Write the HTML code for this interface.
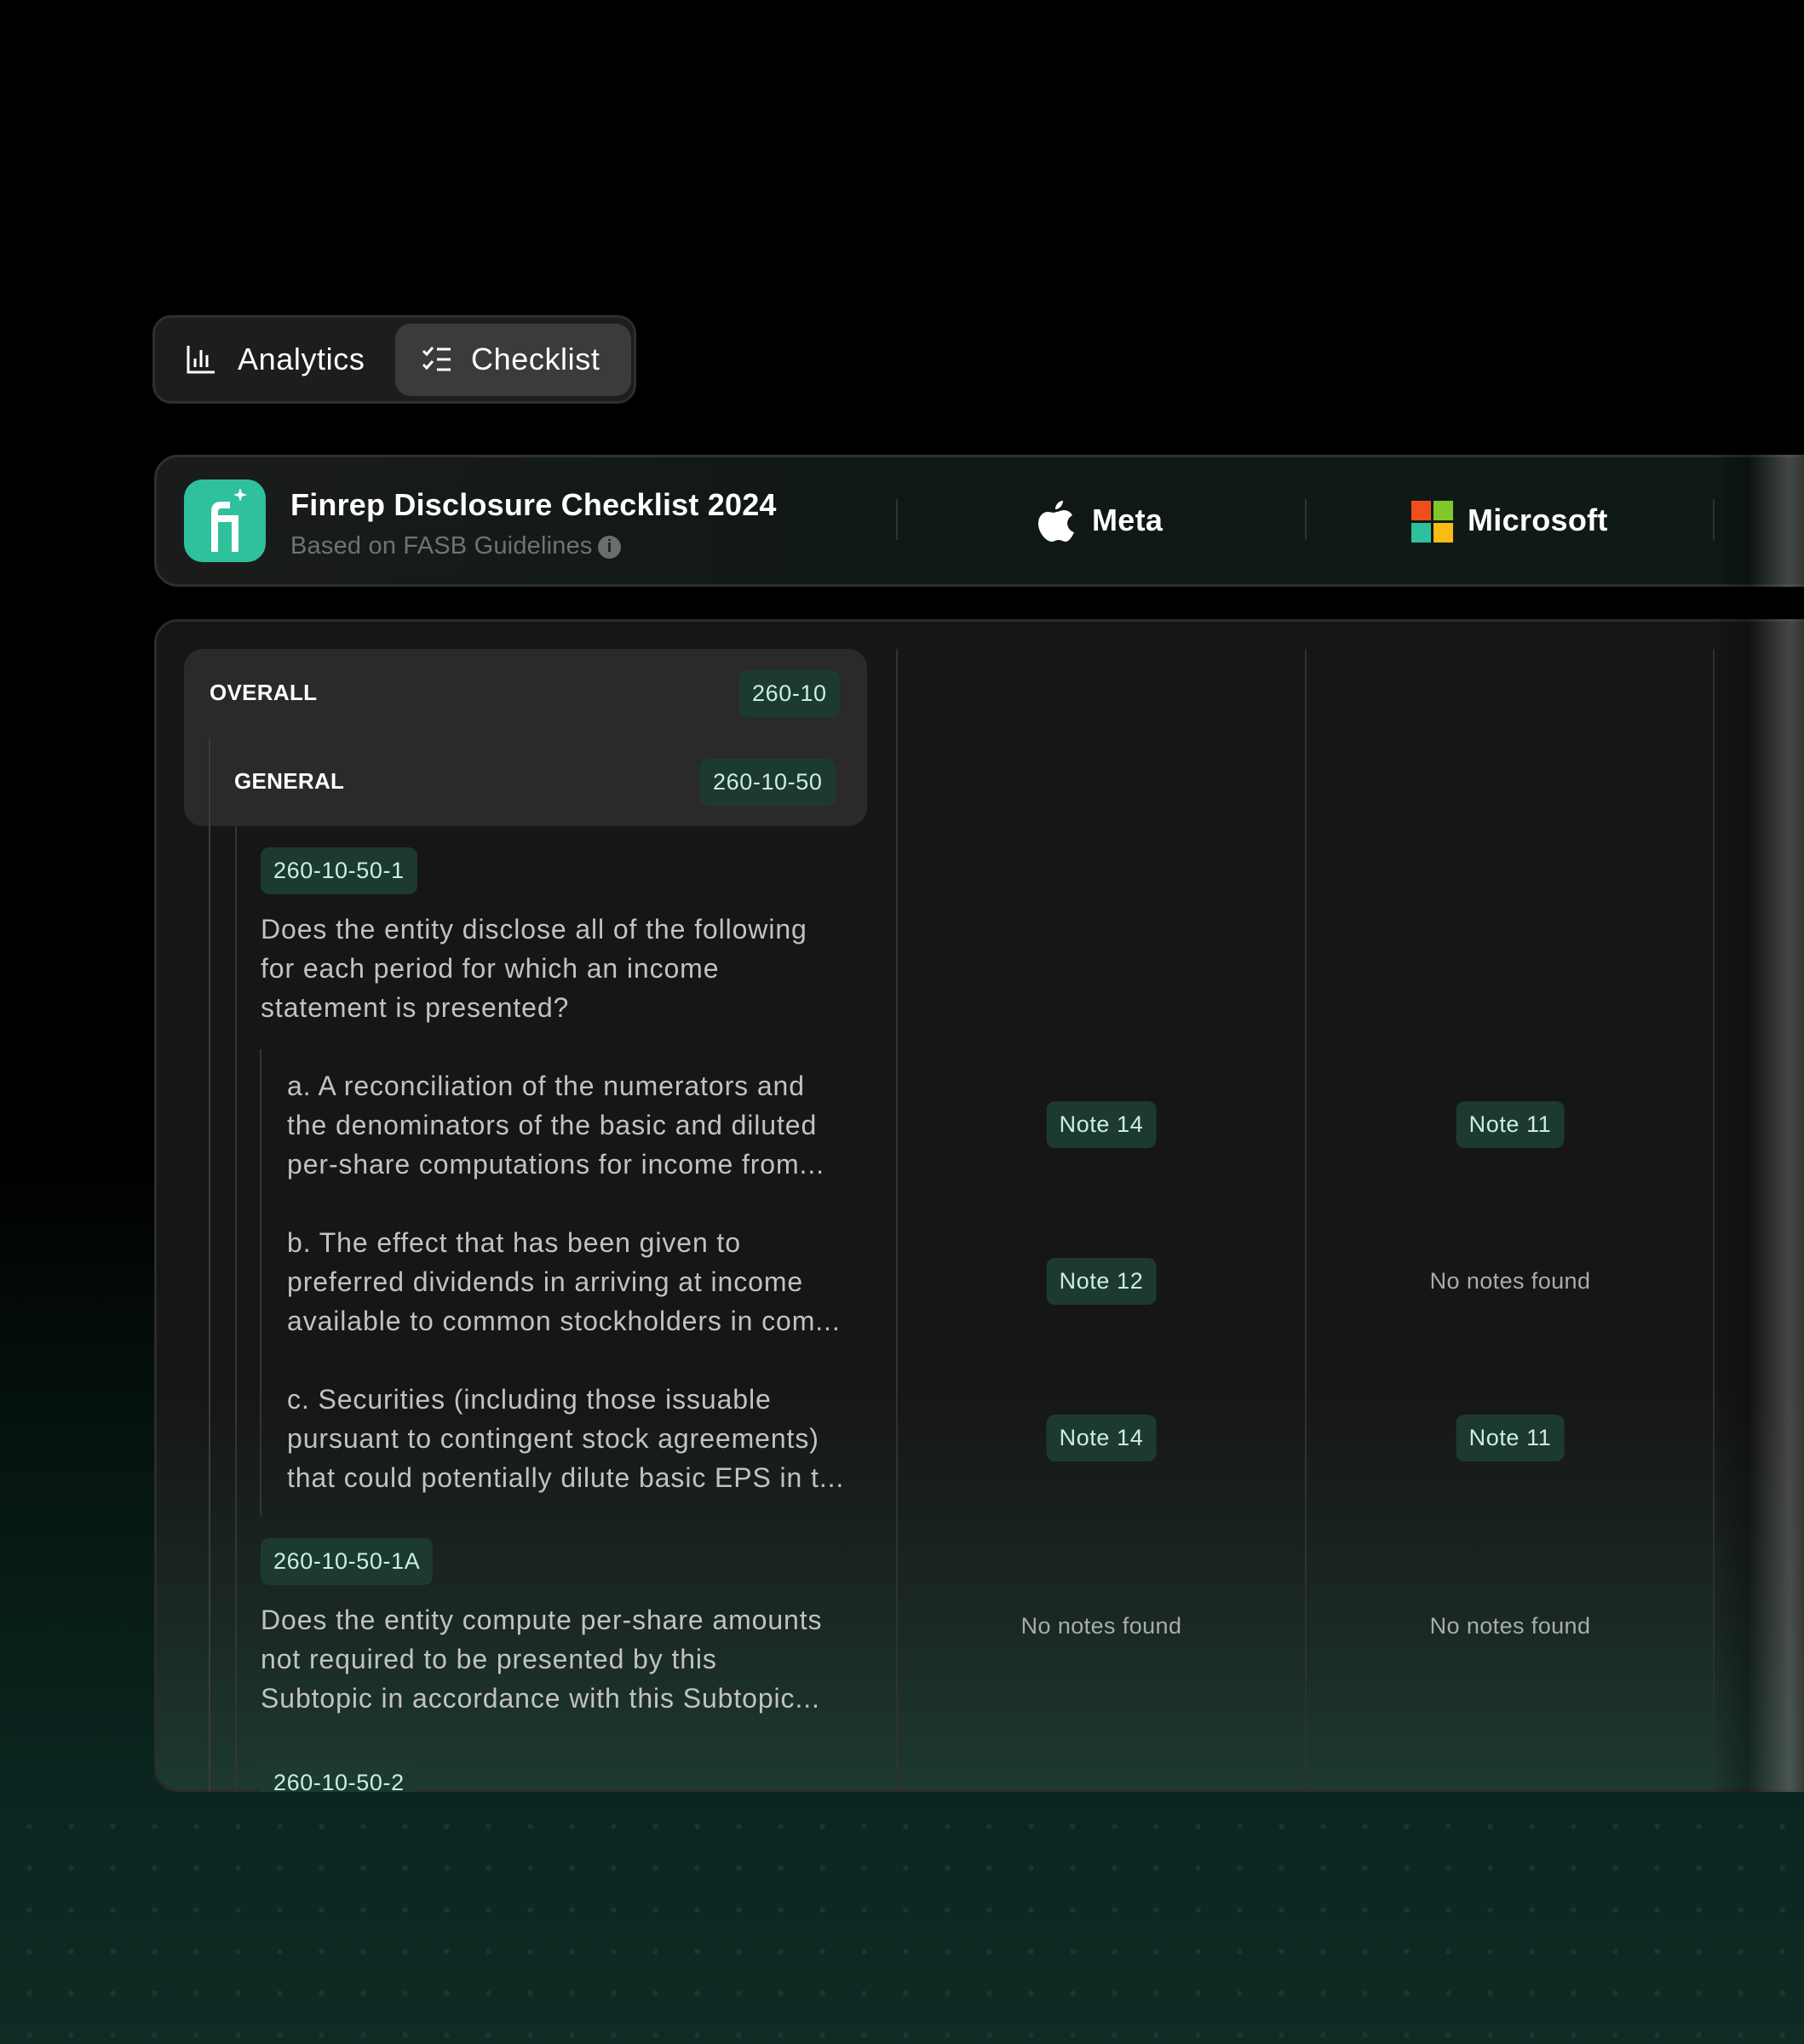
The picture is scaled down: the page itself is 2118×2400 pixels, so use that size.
<!DOCTYPE html>
<html><head><meta charset="utf-8"><style>
*{margin:0;padding:0;box-sizing:border-box}
body{width:2118px;height:2400px;overflow:hidden;font-family:"Liberation Sans",sans-serif;background:linear-gradient(180deg,#000 0,#000 1350px,#06140f 1700px,#0b2620 2100px,#0e2b24 2400px);position:relative;color:#fff}
.dots{position:absolute;left:0;top:2110px;width:2118px;height:290px;background-image:radial-gradient(circle,rgba(255,255,255,0.06) 3px,transparent 3.5px);background-size:49px 49px;background-position:10px 10px}
.a{position:absolute}
.tabs{left:179px;top:370px;width:568px;height:104px;border-radius:22px;background:#1c1e1d;border:3px solid #2c2f2e}
.pill{left:464px;top:380px;width:277px;height:85px;border-radius:18px;background:#3a3b3b}
.tt{font-size:36px;color:#fff;letter-spacing:0.6px}
.card{left:181px;border-radius:28px;border:3px solid #2e302f;width:2000px;overflow:hidden}
.head{top:534px;height:155px;background:linear-gradient(90deg,#1a1c1b,#101816 40%,#0f1a17)}
.body{top:727px;height:1377px;background:linear-gradient(180deg,#161616 0,#161616 900px,#1b2a25 1200px,#1d3a31 1377px);border-color:#2a2c2b}
.fd{background:linear-gradient(90deg,rgba(0,0,0,0),rgba(0,0,0,0.3) 40%,rgba(110,110,110,0.55) 85%,rgba(60,60,60,0.8))}
.vd{width:2px;background:#2f3231}
.badge{position:absolute;height:55px;border-radius:10px;background:#1d3a31;color:#c9f0e0;font-size:27px;line-height:55px;padding:0 15px;letter-spacing:0.6px;white-space:nowrap}
.q{position:absolute;font-size:32px;line-height:46px;color:#c2c2c2;letter-spacing:0.9px;white-space:nowrap}
.nn{position:absolute;font-size:27px;color:#a9acab;transform:translateX(-50%);white-space:nowrap;letter-spacing:0.4px}
.nb{transform:translateX(-50%)}
</style></head><body>
<div class="dots"></div>
<div class="a tabs"></div>
<div class="a pill"></div>
<svg class="a" style="left:219px;top:405px" width="34" height="34" viewBox="0 0 34 34" fill="none" stroke="#fff" stroke-width="3"><path d="M2 1v31h31M10 26v-10M17 26V6M24 26v-14"/></svg>
<div class="a tt" style="left:279px;top:401px">Analytics</div>
<svg class="a" style="left:495px;top:406px" width="36" height="32" viewBox="0 0 36 32" fill="none" stroke="#fff" stroke-width="3"><path d="M2 6l4 4 7-8M2 22l4 4 7-8M18 4h16M18 16h16M18 28h16"/></svg>
<div class="a tt" style="left:553px;top:401px">Checklist</div>

<div class="a card head"></div>
<div class="a" style="left:216px;top:563px;width:96px;height:97px;border-radius:22px;background:#2fc09d"></div>
<svg class="a" style="left:216px;top:563px" width="96" height="97" viewBox="0 0 96 97"><path d="M32 85V38c0-8 4-12 12-12h10v8H44c-3 0-4 1-4 4v4h24v43h-8V50H40v35z" fill="#fff"/><path d="M56 78h8v7h-8z" fill="#fff"/><path d="M66 10l2 6 6 2-6 2-2 6-2-6-6-2 6-2z" fill="#fff"/></svg>
<div class="a" style="left:341px;top:572px;font-size:36px;font-weight:bold;letter-spacing:0.2px">Finrep Disclosure Checklist 2024</div>
<div class="a" style="left:341px;top:625px;font-size:29px;color:#6f7372;letter-spacing:0.2px">Based on FASB Guidelines</div>
<div class="a" style="left:702px;top:629px;width:27px;height:27px;border-radius:50%;background:#6a6e6d;color:#1a1c1b;font-size:20px;font-weight:bold;text-align:center;line-height:27px">i</div>
<div class="a vd" style="left:1052px;top:586px;height:48px"></div>
<div class="a vd" style="left:1532px;top:586px;height:48px"></div>
<div class="a vd" style="left:2011px;top:586px;height:48px"></div>
<svg class="a" style="left:1219px;top:588px" width="42" height="48" viewBox="0 0 42 48"><path d="M29 0c0 5-4 10-9 10 0-5 4-10 9-10zM21 13c3 0 6-2 9-2 4 0 8 2 10 6-9 5-7 17 2 20-2 5-6 11-10 11-3 0-4-2-8-2s-5 2-8 2C9 48 0 37 0 27c0-9 6-14 11-14 4 0 7 2 10 0z" fill="#fff"/></svg>
<div class="a tt" style="left:1282px;top:590px;font-weight:bold;letter-spacing:0.3px">Meta</div>
<div class="a" style="left:1657px;top:588px;width:23px;height:23px;background:#f04e1c"></div>
<div class="a" style="left:1683px;top:588px;width:23px;height:23px;background:#7ec82a"></div>
<div class="a" style="left:1657px;top:614px;width:23px;height:23px;background:#2fc09d"></div>
<div class="a" style="left:1683px;top:614px;width:23px;height:23px;background:#f8bc12"></div>
<div class="a tt" style="left:1723px;top:590px;font-weight:bold;letter-spacing:0.3px">Microsoft</div>
<div class="a fd" style="left:2008px;top:534px;width:110px;height:155px"></div>

<div class="a card body"></div>
<div class="a vd" style="left:1052px;top:762px;height:1342px"></div>
<div class="a vd" style="left:1532px;top:762px;height:1342px"></div>
<div class="a vd" style="left:2011px;top:762px;height:1342px"></div>
<div class="a" style="left:216px;top:762px;width:802px;height:208px;border-radius:22px;background:#2a2a2a"></div>
<div class="a vd" style="left:245px;top:868px;height:1236px;background:#3a3c3b"></div>
<div class="a vd" style="left:276px;top:970px;height:1134px;background:#333534"></div>
<div class="a" style="left:246px;top:798px;font-size:26px;font-weight:bold;letter-spacing:0.3px">OVERALL</div>
<div class="badge" style="left:868px;top:787px">260-10</div>
<div class="a" style="left:275px;top:902px;font-size:26px;font-weight:bold;letter-spacing:0.3px">GENERAL</div>
<div class="badge" style="left:822px;top:891px">260-10-50</div>
<div class="badge" style="left:306px;top:995px">260-10-50-1</div>
<div class="q" style="left:306px;top:1068px">Does the entity disclose all of the following<br>for each period for which an income<br>statement is presented?</div>
<div class="a vd" style="left:305px;top:1232px;height:548px;background:#333534"></div>
<div class="q" style="left:337px;top:1252px">a. A reconciliation of the numerators and<br>the denominators of the basic and diluted<br>per-share computations for income from...</div>
<div class="q" style="left:337px;top:1436px">b. The effect that has been given to<br>preferred dividends in arriving at income<br>available to common stockholders in com...</div>
<div class="q" style="left:337px;top:1620px">c. Securities (including those issuable<br>pursuant to contingent stock agreements)<br>that could potentially dilute basic EPS in t...</div>
<div class="badge" style="left:306px;top:1806px">260-10-50-1A</div>
<div class="q" style="left:306px;top:1879px">Does the entity compute per-share amounts<br>not required to be presented by this<br>Subtopic in accordance with this Subtopic...</div>
<div class="a" style="left:306px;top:2066px;width:193px;height:38px;overflow:hidden"><div class="badge" style="left:0;top:0;border-radius:10px 10px 0 0">260-10-50-2</div></div>

<div class="badge nb" style="left:1293px;top:1293px">Note 14</div>
<div class="badge nb" style="left:1773px;top:1293px">Note 11</div>
<div class="badge nb" style="left:1293px;top:1477px">Note 12</div>
<div class="nn" style="left:1773px;top:1489px">No notes found</div>
<div class="badge nb" style="left:1293px;top:1661px">Note 14</div>
<div class="badge nb" style="left:1773px;top:1661px">Note 11</div>
<div class="nn" style="left:1293px;top:1894px">No notes found</div>
<div class="nn" style="left:1773px;top:1894px">No notes found</div>
<div class="a fd" style="left:2008px;top:727px;width:110px;height:1377px"></div>
</body></html>
